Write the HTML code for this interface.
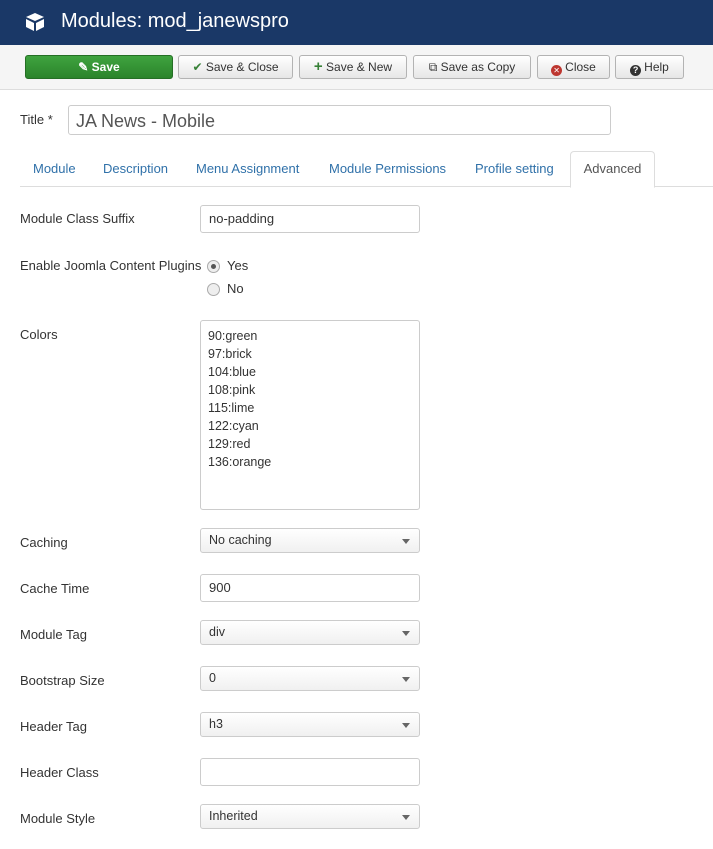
<!DOCTYPE html><html><head><style>
body{margin:0;width:713px;height:849px;overflow:hidden;font-family:"Liberation Sans",sans-serif;font-size:13px;color:#333;background:#fff;position:relative}
.a{position:absolute}
.hdr{left:0;top:0;width:713px;height:45px;background:#1a3867}
.hdr span{position:absolute;left:61px;top:10px;color:#fff;font-size:20px}
.tb{left:0;top:45px;width:713px;height:44px;background:#f5f5f5;border-bottom:1px solid #ddd}
.btn{position:absolute;top:55px;height:22px;border:1px solid #b3b3b3;border-radius:3px;background:linear-gradient(#fff,#e6e6e6);font-size:12px;line-height:22px;text-align:center;color:#333}
.ic{display:inline-block;width:11px;height:11px;border-radius:50%;color:#fff;font-size:8px;line-height:11px;vertical-align:-2px;text-align:center;margin-right:3px}
.lbl{position:absolute;left:20px}
.in{position:absolute;left:200px;border:1px solid #ccc;border-radius:3px;background:#fff;box-sizing:border-box;padding-left:8px;width:220px}
.sel{height:25px;line-height:23px;background:linear-gradient(#fff,#f0f0f0);font-size:12.5px}
.sel:after{content:"";position:absolute;right:9px;top:10px;border:4px solid transparent;border-top:5px solid #666}
.tab{position:absolute;top:161px;color:#3071a9}
.radio{position:absolute;left:207px;width:11px;height:11px;border:1px solid #aaa;border-radius:50%;background:#eee}
</style></head><body>
<div class="a hdr"><svg style="position:absolute;left:25px;top:12px" width="20" height="20" viewBox="0 0 20 20"><path d="M10 1L19 5 10 9 1 5Z M1 7L9 11V19L1 15Z M19 7L11 11V19L19 15Z" fill="#fff"/></svg><span>Modules: mod_janewspro</span></div>
<div class="a tb"></div>
<div class="btn" style="left:25px;width:146px;background:linear-gradient(#3fa33f,#2b842b);border-color:#256f25;color:#fff;font-weight:bold">✎ Save</div>
<div class="btn" style="left:178px;width:113px"><span style="color:#378137">✔</span> Save &amp; Close</div>
<div class="btn" style="left:299px;width:106px"><b style="color:#378137;font-size:15px">+</b> Save &amp; New</div>
<div class="btn" style="left:413px;width:116px">⧉ Save as Copy</div>
<div class="btn" style="left:537px;width:71px"><span class="ic" style="background:#bd362f">✕</span>Close</div>
<div class="btn" style="left:615px;width:67px"><span class="ic" style="background:#333;font-size:9px;font-weight:bold">?</span>Help</div>
<div class="lbl" style="top:112px">Title *</div>
<div class="a" style="left:68px;top:105px;width:543px;height:30px;border:1px solid #ccc;border-radius:3px;box-sizing:border-box;padding:5px 7px;font-size:18px;color:#555">JA News - Mobile</div>
<div class="tab" style="left:33px">Module</div>
<div class="tab" style="left:103px">Description</div>
<div class="tab" style="left:196px">Menu Assignment</div>
<div class="tab" style="left:329px">Module Permissions</div>
<div class="tab" style="left:475px">Profile setting</div>
<div class="a" style="left:20px;top:186px;width:693px;border-top:1px solid #ddd"></div>
<div class="a" style="left:570px;top:151px;width:83px;height:35px;border:1px solid #ddd;border-bottom:1px solid #fff;border-radius:4px 4px 0 0;background:#fff;text-align:center;line-height:34px;color:#555">Advanced</div>
<div class="lbl" style="top:211px">Module Class Suffix</div>
<div class="in" style="top:205px;height:28px;line-height:26px">no-padding</div>
<div class="lbl" style="top:258px">Enable Joomla Content Plugins</div>
<div class="radio" style="top:260px"><div style="margin:3px;width:5px;height:5px;border-radius:50%;background:#555"></div></div><div class="a" style="left:227px;top:258px">Yes</div>
<div class="radio" style="top:283px"></div><div class="a" style="left:227px;top:281px">No</div>
<div class="lbl" style="top:327px">Colors</div>
<div class="in" style="top:320px;height:190px;padding:6px 7px;line-height:18px;font-size:12.5px">90:green<br>97:brick<br>104:blue<br>108:pink<br>115:lime<br>122:cyan<br>129:red<br>136:orange</div>
<div class="lbl" style="top:535px">Caching</div><div class="in sel" style="top:528px">No caching</div>
<div class="lbl" style="top:581px">Cache Time</div><div class="in" style="top:574px;height:28px;line-height:26px">900</div>
<div class="lbl" style="top:627px">Module Tag</div><div class="in sel" style="top:620px">div</div>
<div class="lbl" style="top:673px">Bootstrap Size</div><div class="in sel" style="top:666px">0</div>
<div class="lbl" style="top:719px">Header Tag</div><div class="in sel" style="top:712px">h3</div>
<div class="lbl" style="top:765px">Header Class</div><div class="in" style="top:758px;height:28px"></div>
<div class="lbl" style="top:811px">Module Style</div><div class="in sel" style="top:804px">Inherited</div>
</body></html>
